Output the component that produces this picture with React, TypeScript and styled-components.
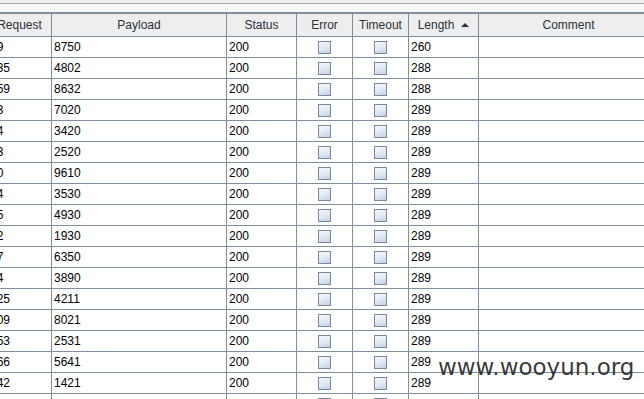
import React from "react";
import styled, { createGlobalStyle } from "styled-components";

const GlobalStyle = createGlobalStyle`
  html, body { margin: 0; padding: 0; background: #ffffff; }
  body { font-family: "Liberation Sans", Arial, sans-serif; font-size: 12px; }
`;

const GRID = "#7f8fa0";

// column widths include the 1px right grid line
const COLS = "64px 175px 70px 56px 56px 70px 180px";

const Screen = styled.div`
  position: relative;
  width: 644px;
  height: 399px;
  overflow: hidden;
  background: #ffffff;
`;

const TopStrip = styled.div`
  height: 3px;
  background: #efefef;
  border-bottom: 1px solid #a8a8a8;
`;

const ToolGap = styled.div`
  height: 8px;
  background: #f8f8f8;
  border-bottom: 2px solid ${GRID};
`;

const Viewport = styled.div`
  overflow: hidden;
`;

const Grid = styled.div`
  display: grid;
  grid-template-columns: ${COLS};
  margin-left: -12px;
  width: max-content;
`;

const HeadCell = styled.div`
  height: 22px;
  display: flex;
  align-items: center;
  justify-content: center;
  gap: 7px;
  background: #eeeeee;
  color: #2b3039;
  border-right: 1px solid ${GRID};
  border-bottom: 1px solid ${GRID};
  white-space: nowrap;
  overflow: hidden;
`;

const SortArrow = styled.span`
  width: 0;
  height: 0;
  border-left: 4px solid transparent;
  border-right: 4px solid transparent;
  border-bottom: 4px solid #2a3340;
  margin-top: -1px;
`;

const Cell = styled.div<{ $center?: boolean }>`
  height: 20px;
  display: flex;
  align-items: center;
  justify-content: ${(p) => (p.$center ? "center" : "flex-start")};
  padding-left: ${(p) => (p.$center ? 0 : 2)}px;
  color: #000000;
  border-right: 1px solid ${GRID};
  border-bottom: 1px solid ${GRID};
  white-space: nowrap;
  overflow: hidden;
`;

const Check = styled.span`
  box-sizing: border-box;
  width: 13px;
  height: 13px;
  border: 1px solid #7689a0;
  background: linear-gradient(160deg, #f7f9fc 0%, #e0e8f2 55%, #c2d1e4 100%);
  margin-right: 1px;
`;

const Watermark = styled.div`
  position: absolute;
  left: 438px;
  top: 356px;
  font-family: "DejaVu Sans", "Liberation Sans", sans-serif;
  font-size: 23px;
  line-height: 1;
  color: rgba(44, 44, 44, 0.94);
  white-space: nowrap;
`;

type Row = { req: number; payload: string; status: number; length: number };

const rows: Row[] = [
  { req: 79, payload: "8750", status: 200, length: 260 },
  { req: 135, payload: "4802", status: 200, length: 288 },
  { req: 159, payload: "8632", status: 200, length: 288 },
  { req: 83, payload: "7020", status: 200, length: 289 },
  { req: 34, payload: "3420", status: 200, length: 289 },
  { req: 23, payload: "2520", status: 200, length: 289 },
  { req: 90, payload: "9610", status: 200, length: 289 },
  { req: 44, payload: "3530", status: 200, length: 289 },
  { req: 45, payload: "4930", status: 200, length: 289 },
  { req: 12, payload: "1930", status: 200, length: 289 },
  { req: 57, payload: "6350", status: 200, length: 289 },
  { req: 84, payload: "3890", status: 200, length: 289 },
  { req: 125, payload: "4211", status: 200, length: 289 },
  { req: 109, payload: "8021", status: 200, length: 289 },
  { req: 153, payload: "2531", status: 200, length: 289 },
  { req: 166, payload: "5641", status: 200, length: 289 },
  { req: 142, payload: "1421", status: 200, length: 289 },
  { req: 117, payload: "7161", status: 200, length: 289 },
];

const headers = ["Request", "Payload", "Status", "Error", "Timeout", "Length", "Comment"];

export default function App() {
  return (
    <Screen>
      <GlobalStyle />
      <TopStrip />
      <ToolGap />
      <Viewport>
        <Grid>
          {headers.map((h) => (
            <HeadCell key={h}>
              {h}
              {h === "Length" && <SortArrow />}
            </HeadCell>
          ))}
          {rows.map((r) => (
            <React.Fragment key={r.req}>
              <Cell>{r.req}</Cell>
              <Cell>{r.payload}</Cell>
              <Cell>{r.status}</Cell>
              <Cell $center>
                <Check />
              </Cell>
              <Cell $center>
                <Check />
              </Cell>
              <Cell>{r.length}</Cell>
              <Cell />
            </React.Fragment>
          ))}
        </Grid>
      </Viewport>
      <Watermark>www.wooyun.org</Watermark>
    </Screen>
  );
}
